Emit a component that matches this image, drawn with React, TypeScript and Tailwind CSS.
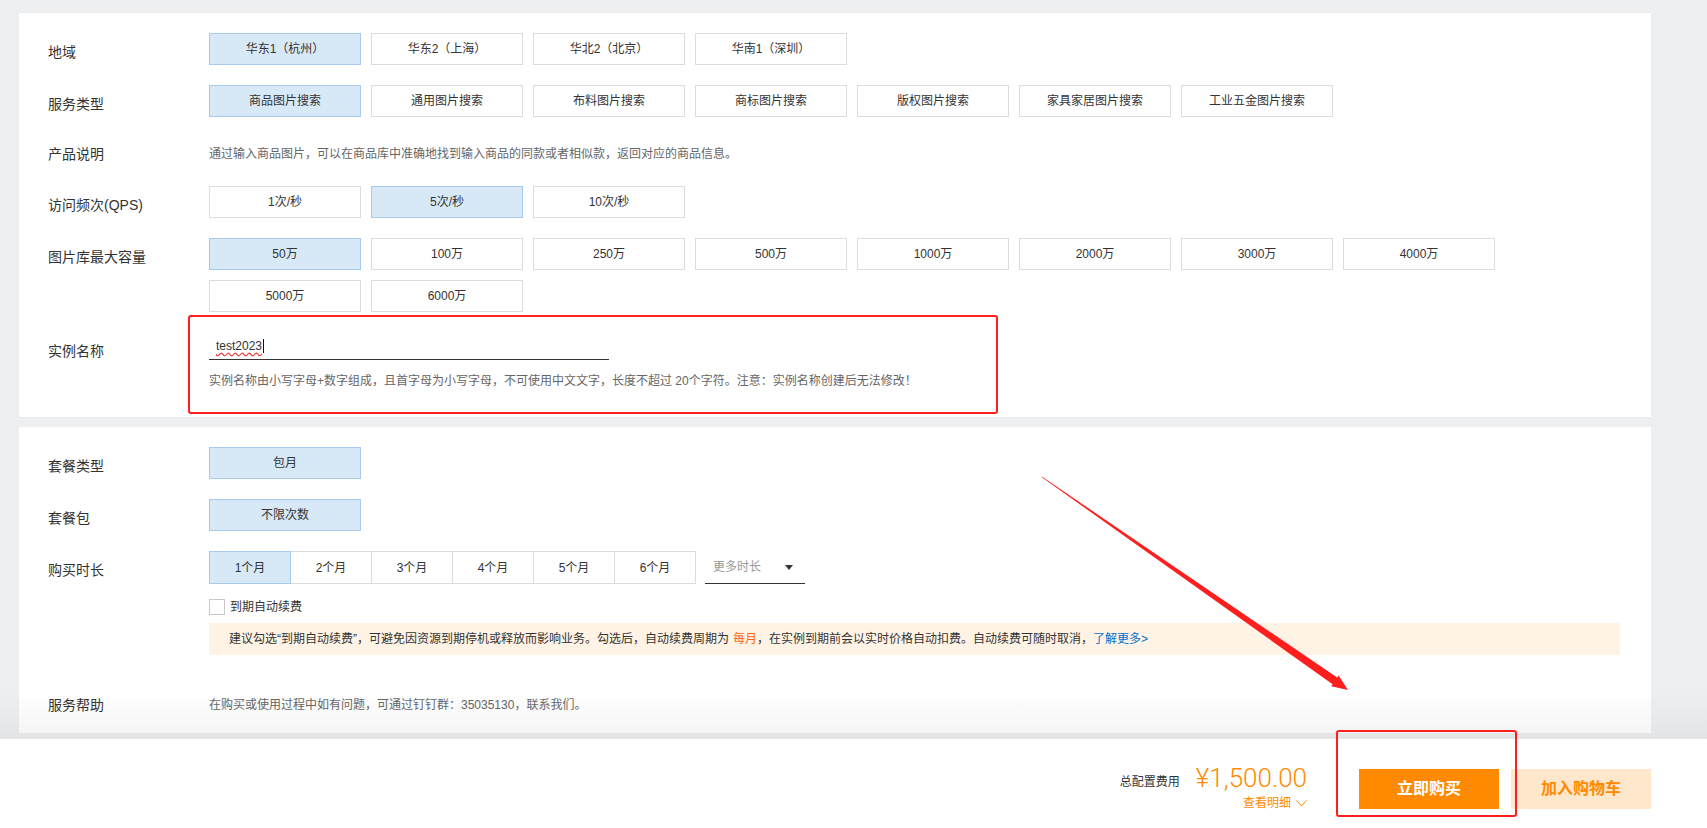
import clsx from 'clsx';

const regions = ['华东1（杭州）', '华东2（上海）', '华北2（北京）', '华南1（深圳）'];
const services = ['商品图片搜索', '通用图片搜索', '布料图片搜索', '商标图片搜索', '版权图片搜索', '家具家居图片搜索', '工业五金图片搜索'];
const qps = ['1次/秒', '5次/秒', '10次/秒'];
const capacity = ['50万', '100万', '250万', '500万', '1000万', '2000万', '3000万', '4000万', '5000万', '6000万'];
const durations = ['1个月', '2个月', '3个月', '4个月', '5个月', '6个月'];

function Opt({ label, active }: { label: string; active?: boolean }) {
  return (
    <div
      className={clsx(
        'flex h-[32px] w-[152px] items-center justify-center border text-xs text-[#333]',
        active ? 'border-[#a9cbeb] bg-[#d7e8f7]' : 'border-[#dcdcdc] bg-white'
      )}
    >
      {label}
    </div>
  );
}

function Label({ children, className }: { children: React.ReactNode; className?: string }) {
  return (
    <div className={clsx('h-[32px] w-[161px] shrink-0 text-sm leading-[20px] text-[#333]', className ?? 'pt-[9px]')}>
      {children}
    </div>
  );
}

export default function App() {
  return (
    <div className="relative h-[828px] w-full overflow-hidden bg-[#eeeff1] font-['Liberation_Sans','Noto_Sans_CJK_SC',sans-serif]">
      <div className="pt-[13px]">
        {/* config card */}
        <div className="ml-[19px] mr-[56px] h-[404px] bg-white pl-[29px] pr-[31px] pt-[20px] shadow-[0_0_2px_rgba(0,0,0,0.06)]">
          <div className="mb-[20px] flex">
            <Label>地域</Label>
            <div className="flex gap-[10px]">
              {regions.map((r, i) => (
                <Opt key={r} label={r} active={i === 0} />
              ))}
            </div>
          </div>
          <div className="mb-[20px] flex">
            <Label>服务类型</Label>
            <div className="flex gap-[10px]">
              {services.map((s, i) => (
                <Opt key={s} label={s} active={i === 0} />
              ))}
            </div>
          </div>
          <div className="mb-[17px] flex">
            <Label className="pt-[7px]">产品说明</Label>
            <div className="h-[32px] pt-[7px] text-xs leading-[20px] text-[#666]">
              通过输入商品图片，可以在商品库中准确地找到输入商品的同款或者相似款，返回对应的商品信息。
            </div>
          </div>
          <div className="mb-[20px] flex">
            <Label>访问频次(QPS)</Label>
            <div className="flex gap-[10px]">
              {qps.map((q, i) => (
                <Opt key={q} label={q} active={i === 1} />
              ))}
            </div>
          </div>
          <div className="mb-[20px] flex">
            <Label>图片库最大容量</Label>
            <div className="flex flex-1 flex-wrap gap-[10px]">
              {capacity.map((c, i) => (
                <Opt key={c} label={c} active={i === 0} />
              ))}
            </div>
          </div>
          <div className="flex">
            <Label>实例名称</Label>
            <div className="relative">
              <div className="flex h-[28px] w-[400px] items-center border-b border-[#333] pl-[7px] text-xs text-[#333]">
                <span className="underline decoration-[#e33] decoration-wavy underline-offset-2">test2023</span>
                <span className="ml-px h-[14px] w-px bg-[#111]" />
              </div>
              <div className="mt-[12px] text-xs leading-[18px] text-[#666]">
                实例名称由小写字母+数字组成，且首字母为小写字母，不可使用中文文字，长度不超过 20个字符。注意：实例名称创建后无法修改！
              </div>
              <div className="pointer-events-none absolute left-[-21px] top-[-17px] h-[99px] w-[810px] rounded-[3px] border-2 border-[#ff1e1e]" />
            </div>
          </div>
        </div>

        {/* package card */}
        <div className="ml-[19px] mr-[56px] mt-[10px] h-[306px] bg-white pl-[29px] pr-[31px] pt-[20px]">
          <div className="mb-[20px] flex">
            <Label>套餐类型</Label>
            <Opt label="包月" active />
          </div>
          <div className="mb-[20px] flex">
            <Label>套餐包</Label>
            <Opt label="不限次数" active />
          </div>
          <div className="flex">
            <Label>购买时长</Label>
            <div className="flex-1">
              <div className="flex items-end">
                <div className="flex">
                  {durations.map((d, i) => (
                    <div
                      key={d}
                      className={clsx(
                        'flex h-[33px] w-[82px] items-center justify-center border text-xs text-[#333]',
                        i > 0 && '-ml-px',
                        i === 0 ? 'relative z-10 border-[#a9cbeb] bg-[#d7e8f7]' : 'border-[#dcdcdc] bg-white'
                      )}
                    >
                      {d}
                    </div>
                  ))}
                </div>
                <div className="ml-[9px] flex h-[33px] w-[100px] items-center justify-between border-b border-[#333] pl-[8px] pr-[12px] text-xs text-[#999]">
                  <span>更多时长</span>
                  <svg width="8" height="5" viewBox="0 0 8 5">
                    <polygon points="0,0 8,0 4,5" fill="#333" />
                  </svg>
                </div>
              </div>
              <div className="mt-[15px] flex items-center">
                <span className="h-[16px] w-[16px] border border-[#c8c8c8] bg-white" />
                <span className="ml-[5px] text-xs text-[#333]">到期自动续费</span>
              </div>
              <div className="mt-[8px] flex h-[32px] items-center bg-[#fff3e6] pl-[20px] text-xs text-[#333]">
                建议勾选“到期自动续费”，可避免因资源到期停机或释放而影响业务。勾选后，自动续费周期为
                <span className="ml-[4px] text-[#ff6a00]">每月</span>，在实例到期前会以实时价格自动扣费。自动续费可随时取消，
                <span className="text-[#0070cc]">了解更多&gt;</span>
              </div>
            </div>
          </div>
          <div className="mt-[31px] flex">
            <Label>服务帮助</Label>
            <div className="h-[32px] pt-[9px] text-xs leading-[20px] text-[#666]">
              在购买或使用过程中如有问题，可通过钉钉群：35035130，联系我们。
            </div>
          </div>
        </div>
      </div>

      {/* footer bar */}
      <div className="absolute bottom-0 left-0 flex h-[89px] w-full justify-end bg-white pr-[56px]">
        <div className="pointer-events-none absolute bottom-full left-0 h-[50px] w-full bg-linear-to-b from-transparent to-black/[0.045]" />
        <div className="mt-[35px] text-xs leading-[16px] text-[#333]">总配置费用</div>
        <div className="ml-[16px] mt-[24px] flex flex-col items-end">
          <div className="font-['Roboto',sans-serif] text-[26px] font-light leading-[30px] text-[#ff8a00]">¥1,500.00</div>
          <div className="mt-[2px] flex items-center text-xs leading-[16px] text-[#ff8a00]">
            查看明细
            <svg className="ml-[5px]" width="11" height="7" viewBox="0 0 11 7">
              <polyline points="0.5,0.5 5.5,6 10.5,0.5" fill="none" stroke="#ff8a00" strokeWidth="1" />
            </svg>
          </div>
        </div>
        <div className="relative ml-[52px] mt-[30px]">
          <div className="flex h-[40px] w-[140px] items-center justify-center bg-[#ff8a00] text-base font-bold text-white">
            立即购买
          </div>
          <div className="pointer-events-none absolute left-[-23px] top-[-39px] z-10 h-[87px] w-[181px] rounded-[3px] border-2 border-[#ff1e1e]" />
        </div>
        <div className="ml-[12px] mt-[30px] flex h-[40px] w-[140px] items-center justify-center bg-[#ffe7cc] text-base font-bold text-[#ff8a00]">
          加入购物车
        </div>
      </div>

      {/* annotation arrow */}
      <svg className="pointer-events-none absolute left-0 top-0 z-20" width="1707" height="828" viewBox="0 0 1707 828">
        <polygon
          points="1041.8,477.25 1332.6,684.2 1331.2,686.2 1348,690 1338.6,675.6 1337.2,677.6 1042.2,476.75"
          fill="#ff1e1e"
        />
      </svg>
    </div>
  );
}
